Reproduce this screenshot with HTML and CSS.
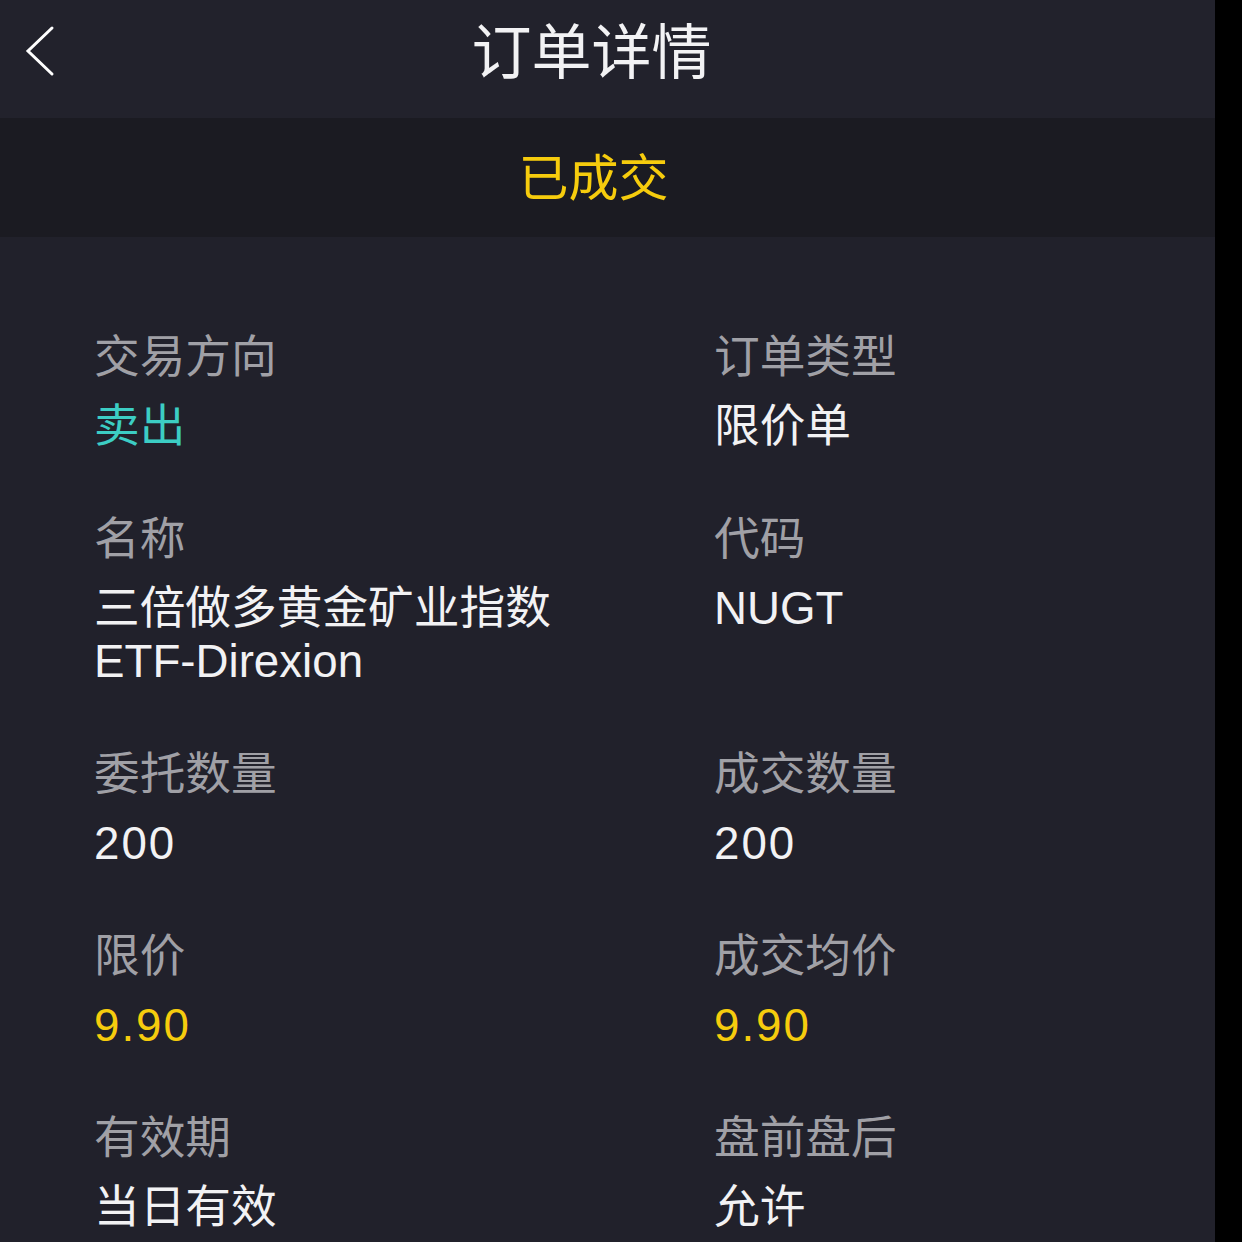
FILE: index.html
```html
<!DOCTYPE html>
<html lang="zh-CN">
<head>
<meta charset="utf-8">
<title>订单详情</title>
<link rel="stylesheet" href="styles.css">
</head>
<body>
<div class="app">
  <header class="nav">
    <button class="back" aria-label="返回">
      <svg width="34" height="52" viewBox="0 0 34 52"><polyline points="28,3 4,26 28,49" fill="none" stroke="#ffffff" stroke-width="3" stroke-linecap="round" stroke-linejoin="miter"/></svg>
    </button>
    <h1 class="title">订单详情</h1>
  </header>
  <div class="status">已成交</div>
  <main class="grid">
    <div class="field">
      <div class="label">交易方向</div>
      <div class="value sell">卖出</div>
    </div>
    <div class="field">
      <div class="label">订单类型</div>
      <div class="value">限价单</div>
    </div>
    <div class="field">
      <div class="label">名称</div>
      <div class="value">三倍做多黄金矿业指数<br>ETF-Direxion</div>
    </div>
    <div class="field">
      <div class="label">代码</div>
      <div class="value">NUGT</div>
    </div>
    <div class="field">
      <div class="label">委托数量</div>
      <div class="value num">200</div>
    </div>
    <div class="field">
      <div class="label">成交数量</div>
      <div class="value num">200</div>
    </div>
    <div class="field">
      <div class="label">限价</div>
      <div class="value num price">9.90</div>
    </div>
    <div class="field">
      <div class="label">成交均价</div>
      <div class="value num price">9.90</div>
    </div>
    <div class="field">
      <div class="label">有效期</div>
      <div class="value">当日有效</div>
    </div>
    <div class="field">
      <div class="label">盘前盘后</div>
      <div class="value">允许</div>
    </div>
  </main>
</div>
</body>
</html>
```

FILE: styles.css
```css
html, body {
  margin: 0;
  padding: 0;
  background: #000000;
  height: 100%;
  overflow: hidden;
}

body {
  font-family: "Liberation Sans", "Noto Sans CJK SC", sans-serif;
}

.app {
  width: 1215px;
  height: 1242px;
  background: #21212b;
  overflow: hidden;
}

.nav {
  height: 118px;
  background: #22222c;
  display: flex;
  align-items: center;
  justify-content: center;
  position: relative;
}

.back {
  position: absolute;
  left: 24px;
  top: 25px;
  background: none;
  border: 0;
  padding: 0;
  width: 34px;
  height: 52px;
  display: flex;
}

.title {
  margin: 0 0 10px -32px;
  font-weight: 400;
  font-size: 60px;
  line-height: 70px;
  color: #f2f2f4;
  letter-spacing: 0;
}

.status {
  height: 119px;
  background: #1b1b22;
  color: #f6cc0d;
  font-size: 50px;
  display: flex;
  align-items: center;
  justify-content: center;
  padding: 0 28px 8px 0;
  box-sizing: border-box;
}

.grid {
  display: grid;
  grid-template-columns: 620px 620px;
  padding: 94px 0 0 94px;
  row-gap: 60px;
}

.label {
  font-size: 45.7px;
  line-height: 53px;
  color: #a0a0a6;
  margin-bottom: 16px;
}

.value {
  font-size: 45.7px;
  line-height: 53px;
  color: #f2f2f4;
}

.value.num {
  letter-spacing: 2px;
}

.value.sell {
  color: #3ccdc4;
}

.value.price {
  color: #f6cc0d;
}
```
